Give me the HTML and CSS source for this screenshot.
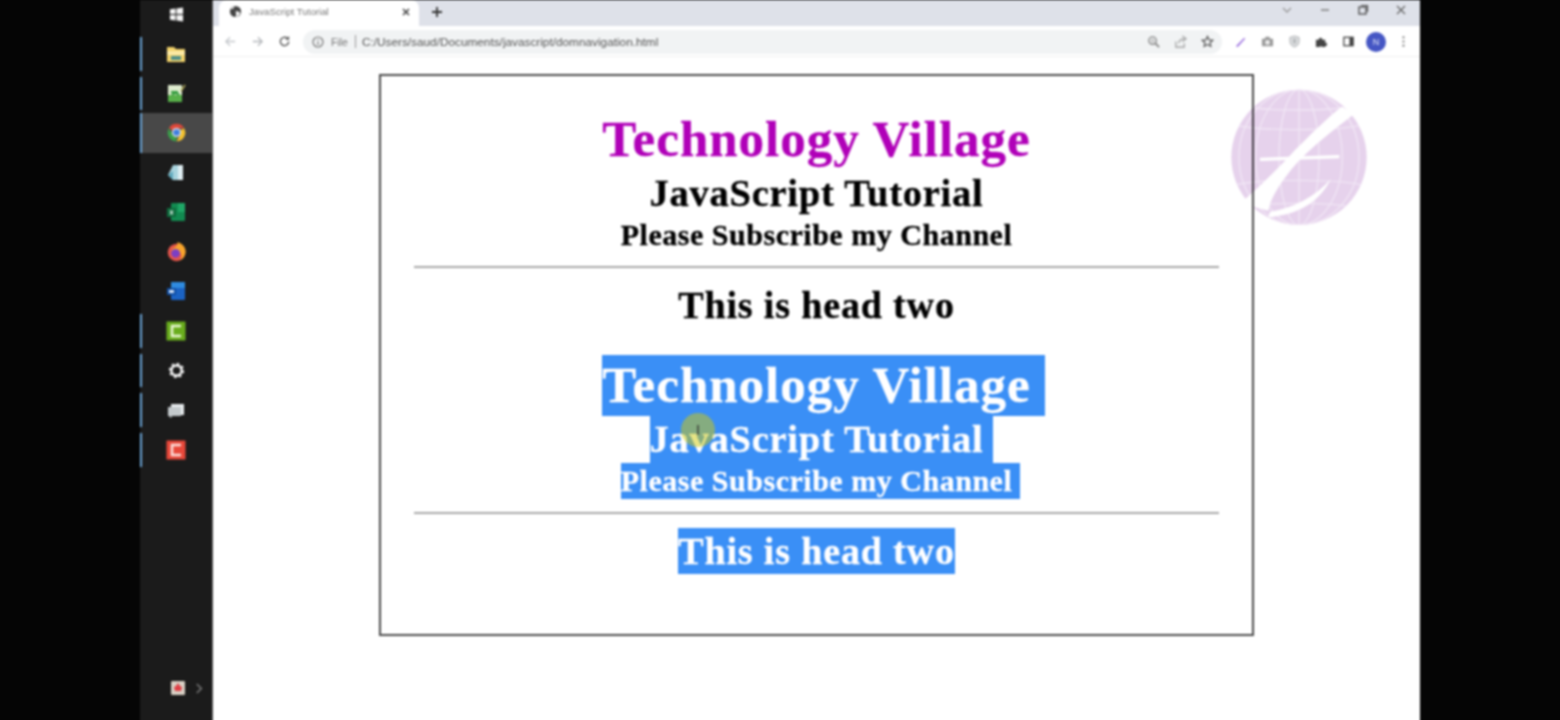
FILE: index.html
```html
<!DOCTYPE html>
<html lang="en">
  <head>
    <meta charset="UTF-8" />
    <title>JavaScript Tutorial</title>
    <link rel="stylesheet" href="styles.css">
  </head>
  <body>
    <main class="screen">
      <!-- side dock -->
      <nav class="dock">
        <div class="dock-item is-start">
          <svg viewBox="0 0 16 16" class="dock-icon"><path d="M1 2.500l6-1v6H1zM8 1.500l7-1v7H8zM1 8.500h6v6l-6-1zM8 8.500h7v7l-7-1z" fill="#f4f4f4"/></svg>
        </div>
        <div class="dock-item is-running">
          <svg viewBox="0 0 20 20" class="dock-icon"><path d="M1 3h7l2 2h9v13H1z" fill="#f3d36b"/><rect x="1" y="7" width="18" height="4" fill="#fbe9a6"/><rect x="5" y="12" width="10" height="4" fill="#4f8f8a"/></svg>
        </div>
        <div class="dock-item is-running">
          <svg viewBox="0 0 20 20" class="dock-icon"><rect x="2" y="2" width="14" height="17" fill="#dfeccf"/><rect x="2" y="12" width="14" height="7" fill="#58b04a"/><path d="M6 12a4 4 0 0 1 7 0M5 9h7" stroke="#2f9a3a" stroke-width="2" fill="none"/><path d="M15 8l4-6" stroke="#b8b060" stroke-width="1.500"/></svg>
        </div>
        <div class="dock-item is-running is-active">
          <svg viewBox="0 0 24 24" class="dock-icon is-round">
            <path d="M3.300 7A10 10 0 0 1 20.700 7H12a5 5 0 0 0-4.300 2.500z" fill="#e0483a"/>
            <path d="M20.700 7A10 10 0 0 1 12 22l4.300-7.500A5 5 0 0 0 16.300 9.500z" fill="#f3c22f"/>
            <path d="M12 22A10 10 0 0 1 3.300 7l4.400 7.500A5 5 0 0 0 12 17z" fill="#3b9f4a"/>
            <circle cx="12" cy="12" r="5.200" fill="#f2f2f2"/>
            <circle cx="12" cy="12" r="3.800" fill="#3f7fe0"/>
          </svg>
        </div>
        <div class="dock-item">
          <svg viewBox="0 0 20 20" class="dock-icon"><path d="M7 2h10v15H7L2 12z" fill="#a9d4de"/><path d="M12 2h5v15h-5z" fill="#dfeef2"/><path d="M2 12l5-4v9z" fill="#5fa9bd"/></svg>
        </div>
        <div class="dock-item">
          <svg viewBox="0 0 20 20" class="dock-icon"><rect x="5" y="1" width="14" height="18" rx="1" fill="#128a50"/><rect x="12" y="1" width="7" height="9" fill="#1fa766"/><rect x="1" y="6" width="9" height="9" fill="#0d6b3c"/><path d="M4 8.500l3 4M7 8.500l-3 4" stroke="#e8f5ee" stroke-width="1.200"/></svg>
        </div>
        <div class="dock-item">
          <svg viewBox="0 0 24 24" class="dock-icon is-round">
            <circle cx="12" cy="13" r="10" fill="#e5554a"/>
            <path d="M13 1c7 2 11 8 9 14-1 4-4 6-6 7 3-4 2-9-3-11-3-1-5 0-6 2-1-2 0-4 2-5 3-2 5-4 4-7z" fill="#f9a52c"/>
            <circle cx="11" cy="14" r="5" fill="#7b3fc4"/>
          </svg>
        </div>
        <div class="dock-item">
          <svg viewBox="0 0 20 20" class="dock-icon"><rect x="5" y="1" width="14" height="18" rx="1" fill="#1b63c4"/><rect x="5" y="1" width="14" height="6" fill="#2f8be0"/><rect x="1" y="7" width="9" height="7" fill="#0f4da3"/><rect x="3" y="9" width="5" height="3" fill="#d6e6f8"/></svg>
        </div>
        <div class="dock-item is-running">
          <svg viewBox="0 0 20 20" class="dock-icon"><rect x="0.500" y="0.500" width="19" height="19" fill="#69ad1d"/><path d="M15 5H6v10h9" fill="none" stroke="#e9f7d4" stroke-width="2.500"/></svg>
        </div>
        <div class="dock-item is-running">
          <svg viewBox="0 0 20 20" class="dock-icon is-small"><circle cx="10" cy="10" r="6" fill="none" stroke="#f2f2f2" stroke-width="3"/><circle cx="10" cy="10" r="7.800" fill="none" stroke="#f2f2f2" stroke-width="2.500" stroke-dasharray="3 3.130"/></svg>
        </div>
        <div class="dock-item is-running">
          <svg viewBox="0 0 20 20" class="dock-icon"><path d="M5 4h13v11H5z" fill="#e8ecee"/><path d="M2 7h13v9H6l-1 2-2-2H2z" fill="#c3c9cc"/></svg>
        </div>
        <div class="dock-item is-running">
          <svg viewBox="0 0 20 20" class="dock-icon"><rect x="0.500" y="0.500" width="19" height="19" fill="#e8483a"/><path d="M15 5H6v10h9" fill="none" stroke="#fbe0dc" stroke-width="2.500"/></svg>
        </div>
        <div class="dock-tray">
          <svg viewBox="0 0 14 14" class="tray-icon"><rect width="14" height="14" rx="1" fill="#d8cfc4"/><path d="M7 2l2 3 2 1-1 4H4L3 6l2-1z" fill="#df3f45"/></svg>
          <svg viewBox="0 0 10 14" class="tray-arrow"><path d="M2 2l5 5-5 5" fill="none" stroke="#777" stroke-width="1.800"/></svg>
        </div>
      </nav>

      <section class="browser">
        <header class="tab-strip">
          <div class="tab">
            <svg viewBox="0 0 14 14" class="tab-favicon"><circle cx="7" cy="7" r="6" fill="#444"/><path d="M2 4c2 1 3 0 4-3M7 7c2-1 4 0 5 2-2 3-3 4-5 4 1-2 1-4 0-6z" fill="#fff"/></svg>
            <span class="tab-title">JavaScript Tutorial</span>
            <svg viewBox="0 0 10 10" class="tab-close"><path d="M2 2l6 6M8 2l-6 6" stroke="#444" stroke-width="1.600"/></svg>
          </div>
          <svg viewBox="0 0 12 12" class="tab-new"><path d="M6 1v10M1 6h10" stroke="#333" stroke-width="1.800"/></svg>
          <div class="window-controls">
            <svg viewBox="0 0 12 12" class="win-btn"><path d="M2 4l4 4 4-4" fill="none" stroke="#999" stroke-width="1.300"/></svg>
            <svg viewBox="0 0 12 12" class="win-btn"><path d="M2 6h8" stroke="#777" stroke-width="1.400"/></svg>
            <svg viewBox="0 0 12 12" class="win-btn"><rect x="2" y="3" width="7" height="7" fill="none" stroke="#555" stroke-width="1.400"/><path d="M4 1.500h6.500V8" fill="none" stroke="#555" stroke-width="1.200"/></svg>
            <svg viewBox="0 0 12 12" class="win-btn"><path d="M2 2l8 8M10 2l-8 8" stroke="#666" stroke-width="1.300"/></svg>
          </div>
        </header>

        <div class="toolbar">
          <div class="nav-buttons">
            <svg viewBox="0 0 14 14" class="nav-btn"><path d="M12 7H2M6.500 2.500L2 7l4.500 4.500" fill="none" stroke="#c4c7cb" stroke-width="1.400"/></svg>
            <svg viewBox="0 0 14 14" class="nav-btn"><path d="M2 7h10M7.500 2.500L12 7l-4.500 4.500" fill="none" stroke="#b4b7bb" stroke-width="1.400"/></svg>
            <svg viewBox="0 0 14 14" class="nav-btn"><path d="M11.500 7a4.500 4.500 0 1 1-1.300-3.200" fill="none" stroke="#555" stroke-width="1.500"/><path d="M12 1v4H8z" fill="#555"/></svg>
          </div>
          <div class="omnibox">
            <svg viewBox="0 0 12 12" class="info-icon"><circle cx="6" cy="6" r="5" fill="none" stroke="#777" stroke-width="1.200"/><path d="M6 5.500V9M6 3v1.300" stroke="#777" stroke-width="1.200"/></svg>
            <span class="url-scheme">File</span>
            <span class="url-sep"></span>
            <span class="url-path">C:/Users/saud/Documents/javascript/domnavigation.html</span>
            <div class="omnibox-actions">
              <svg viewBox="0 0 14 14" class="tool-btn"><circle cx="6" cy="6" r="4" fill="none" stroke="#888" stroke-width="1.500"/><path d="M9 9l4 4" stroke="#888" stroke-width="2"/><path d="M4 6h4M6 4v4" stroke="#aaa"/></svg>
              <svg viewBox="0 0 14 14" class="tool-btn"><path d="M2 7v6h9V9" fill="none" stroke="#999" stroke-width="1.200"/><path d="M5 9c0-3 3-5 6-5M9 1l4 3-4 3" fill="none" stroke="#999" stroke-width="1.200"/></svg>
              <svg viewBox="0 0 14 14" class="tool-btn"><path d="M7 1.500l1.700 3.700 4 .4-3 2.700.9 4L7 10.300l-3.600 2 .9-4-3-2.700 4-.4z" fill="none" stroke="#555" stroke-width="1.300"/></svg>
            </div>
          </div>
          <div class="extensions">
            <svg viewBox="0 0 14 14" class="tool-btn"><path d="M2 12L11 3l1 1-8 9z" fill="#9b6fe0"/></svg>
            <svg viewBox="0 0 14 14" class="tool-btn"><path d="M1 4h3l1-2h4l1 2h3v8H1z" fill="#9a9a9a"/><circle cx="7" cy="8" r="2.500" fill="#eee"/></svg>
            <svg viewBox="0 0 14 14" class="tool-btn"><path d="M7 1l5 1.500V7c0 3-2 5-5 6-3-1-5-3-5-6V2.500z" fill="#d8dadc" stroke="#b5b8ba"/><rect x="6" y="4" width="2" height="5" fill="#a8abad"/></svg>
            <svg viewBox="0 0 14 14" class="tool-btn"><path d="M1 5h3a2 2 0 0 1 4 0h3v3a2 2 0 0 1 0 4v1H8a2 2 0 0 0-3 0H1z" fill="#444"/></svg>
            <svg viewBox="0 0 14 14" class="tool-btn"><rect x="2" y="2.500" width="10" height="9" fill="#fff" stroke="#444" stroke-width="1.400"/><rect x="8" y="2.500" width="4" height="9" fill="#444"/></svg>
            <span class="avatar">N</span>
            <svg viewBox="0 0 14 14" class="tool-btn is-menu"><circle cx="7" cy="2.500" r="1.200" fill="#777"/><circle cx="7" cy="7" r="1.200" fill="#777"/><circle cx="7" cy="11.500" r="1.200" fill="#777"/></svg>
          </div>
        </div>

        <div class="page">
          <article class="sheet">
            <div class="block">
              <h1 class="line-one"><span class="line-text is-purple">Technology Village</span></h1>
              <h2 class="line-two"><span class="line-text">JavaScript Tutorial</span></h2>
              <h3 class="line-three"><span class="line-text">Please Subscribe my Channel</span></h3>
              <hr class="rule" />
              <h2 class="line-head"><span class="line-text">This is head two</span></h2>
            </div>
            <div class="block is-selected">
              <h1 class="line-one"><span class="line-text has-tail-one">Technology Village</span></h1>
              <h2 class="line-two"><span class="line-text has-tail-two">JavaScript Tutorial</span></h2>
              <h3 class="line-three"><span class="line-text has-tail-three">Please Subscribe my Channel</span></h3>
              <hr class="rule" />
              <h2 class="line-head"><span class="line-text">This is head two</span></h2>
            </div>
          </article>

          <!-- cursor highlight, over the selected text -->
          <div class="cursor-dot"><span class="cursor-bar"></span></div>

          <!-- channel watermark -->
          <svg viewBox="0 0 480 480" class="watermark">
            <defs>
              <clipPath id="globe-clip"><circle cx="237" cy="232" r="203"/></clipPath>
            </defs>
            <circle cx="237" cy="232" r="203" fill="#e6d2ec"/>
            <g clip-path="url(#globe-clip)" fill="none" stroke="#f1e6f5" stroke-width="4">
              <ellipse cx="237" cy="232" rx="60" ry="203"/>
              <ellipse cx="237" cy="232" rx="130" ry="203"/>
              <ellipse cx="237" cy="232" rx="180" ry="203"/>
              <path d="M237 20v430"/>
              <path d="M30 130c60 25 350 25 410 0M60 75c60 20 290 20 350 0M30 320c60-25 350-25 410 0M70 385c60-20 280-20 340 0"/>
            </g>
            <path d="M365 80L405 100C330 160 250 215 190 300 165 335 150 365 145 392L60 370C120 320 170 270 225 210 270 165 320 115 365 80z" fill="#fff"/>
            <path d="M150 395C220 385 285 350 332 298 300 365 235 405 145 412z" fill="#fff"/>
            <path d="M120 233L358 225V235L120 243z" fill="#fff"/>
          </svg>
        </div>
      </section>
    </main>
  </body>
</html>
```

FILE: styles.css
```css
:root {
  --dock-bg: #1b1b1b;
  --strip-bg: #dee1e9;
  --selection: #3a8ff6;
  --sheet-border: #4a4a4a;
}

* {
  box-sizing: border-box;
  margin: 0;
  padding: 0;
}

html,
body {
  height: 100%;
  overflow: hidden;
  background: #050505;
}

body {
  font-family: "Liberation Sans", Arial, sans-serif;
}

/* a little taller than the window, so the blur has no edge to fade at the bottom */
.screen {
  display: flex;
  width: 1280px;
  height: 730px;
  margin-left: 140px;
  filter: blur(0.8px);
}

/* dock */

.dock {
  display: flex;
  flex-direction: column;
  flex: 0 0 73px;
  background: var(--dock-bg);
  border-right: 1px solid #555;
}

.dock-item {
  position: relative;
  display: flex;
  align-items: center;
  justify-content: center;
  height: 39.6px;
}

.dock-item.is-start {
  height: 34px;
  padding-bottom: 6px;
}

.dock-item.is-active {
  background: #484848;
}

.dock-item.is-running::before {
  content: "";
  position: absolute;
  left: 0;
  top: 3px;
  bottom: 3px;
  width: 2px;
  background: #6ea7d8;
}

.dock-item.is-active::before {
  top: 0;
  bottom: 0;
}

.dock-icon {
  width: 20px;
  height: 20px;
}

.dock-icon.is-round {
  width: 21px;
  height: 21px;
}

.dock-icon.is-small {
  width: 17px;
  height: 17px;
}

.is-start .dock-icon {
  width: 15px;
  height: 15px;
}

.dock-tray {
  display: flex;
  align-items: center;
  gap: 10px;
  margin-top: auto;
  padding: 0 0 35px 31px;
}

.tray-icon {
  width: 14px;
  height: 14px;
}

.tray-arrow {
  width: 9px;
  height: 13px;
}

/* browser chrome */

.browser {
  display: flex;
  flex-direction: column;
  flex: 1;
  background: #fff;
}

.tab-strip {
  display: flex;
  align-items: center;
  flex: 0 0 26px;
  padding-left: 6px;
  background: var(--strip-bg);
}

.tab {
  display: flex;
  align-items: center;
  width: 200px;
  height: 26px;
  padding: 0 8px 3px 10px;
  background: #fff;
  border-radius: 8px 8px 0 0;
}

.tab-favicon {
  width: 13px;
  height: 13px;
  margin-right: 7px;
}

.tab-title {
  font-size: 9.7px;
  color: #777;
  white-space: nowrap;
}

.tab-close {
  width: 10px;
  height: 10px;
  margin-left: auto;
}

.tab-new {
  width: 12px;
  height: 12px;
  margin-left: 12px;
  margin-top: -2px;
}

.window-controls {
  display: flex;
  gap: 26px;
  margin-left: auto;
  margin-right: 13px;
  margin-top: -6px;
}

.win-btn {
  width: 12px;
  height: 12px;
}

.toolbar {
  display: flex;
  align-items: center;
  flex: 0 0 31px;
  padding-top: 1px;
  border-bottom: 1px solid #f0f0f0;
}

.nav-buttons {
  display: flex;
  gap: 14px;
  padding-left: 11px;
}

.nav-btn {
  width: 13px;
  height: 13px;
}

.omnibox {
  display: flex;
  align-items: center;
  width: 919px;
  height: 24px;
  margin-left: 12px;
  padding: 0 8px 0 9px;
  background: #f1f3f4;
  border-radius: 12px;
}

.info-icon {
  width: 12px;
  height: 12px;
}

.url-scheme {
  margin-left: 7px;
  font-size: 10.5px;
  color: #777;
}

.url-sep {
  width: 1px;
  height: 13px;
  margin: 0 6px 0 7px;
  background: #999;
}

.url-path {
  font-size: 11.8px;
  color: #555;
  white-space: nowrap;
}

.omnibox-actions {
  display: flex;
  gap: 14px;
  margin-left: auto;
}

.tool-btn {
  width: 13px;
  height: 13px;
}

.extensions {
  display: flex;
  align-items: center;
  gap: 14px;
  margin-left: 12px;
}

.avatar {
  display: grid;
  place-items: center;
  width: 20px;
  height: 20px;
  margin: 0 -3px;
  border-radius: 50%;
  background: #4556c4;
  color: #dfe3f7;
  font-size: 9px;
}

/* page */

.page {
  position: relative;
  flex: 1;
  padding: 17px 0 0 166px;
}

.sheet {
  width: 875px;
  height: 562px;
  padding: 33px 33px 0;
  border: 2px solid var(--sheet-border);
  background: #fff;
}

.block {
  font-family: "Liberation Serif", "Times New Roman", serif;
  text-align: center;
  color: #000;
  padding-bottom: 27px;
  -webkit-text-stroke: 0.3px;
}

.block h1,
.block h2,
.block h3 {
  font-weight: bold;
}

.line-text {
  display: inline-block;
}

.line-one {
  font-size: 51px;
  letter-spacing: 1px;
  line-height: 61px;
  height: 61px;
}

.line-two {
  font-size: 38.5px;
  letter-spacing: 0.74px;
  line-height: 47px;
  height: 47px;
}

.line-three {
  font-size: 30px;
  letter-spacing: 0.52px;
  line-height: 36px;
  height: 36px;
}

.line-head {
  font-size: 38px;
  letter-spacing: 0.85px;
  line-height: 46px;
  height: 46px;
}

.is-purple {
  color: #b000b8;
}

.rule {
  height: 2px;
  margin: 13px 0 14px;
  border: 0;
  background: #a8a8a8;
}

.is-selected .line-text {
  background: var(--selection);
  color: #fff;
}

.has-tail-one {
  padding-right: 14px;
  margin-right: -14px;
}

.has-tail-two {
  padding-right: 10px;
  margin-right: -10px;
}

.has-tail-three {
  padding-right: 8px;
  margin-right: -8px;
}

.cursor-dot {
  position: absolute;
  left: 468px;
  top: 356px;
  display: grid;
  place-items: center;
  width: 34px;
  height: 34px;
  border-radius: 50%;
  background: rgba(208, 201, 9, 0.5);
}

.cursor-bar {
  width: 2px;
  height: 10px;
  background: #4d5a4a;
}

.watermark {
  position: absolute;
  left: 1007px;
  top: 23px;
  width: 160px;
  height: 160px;
  mix-blend-mode: multiply;
}
```
